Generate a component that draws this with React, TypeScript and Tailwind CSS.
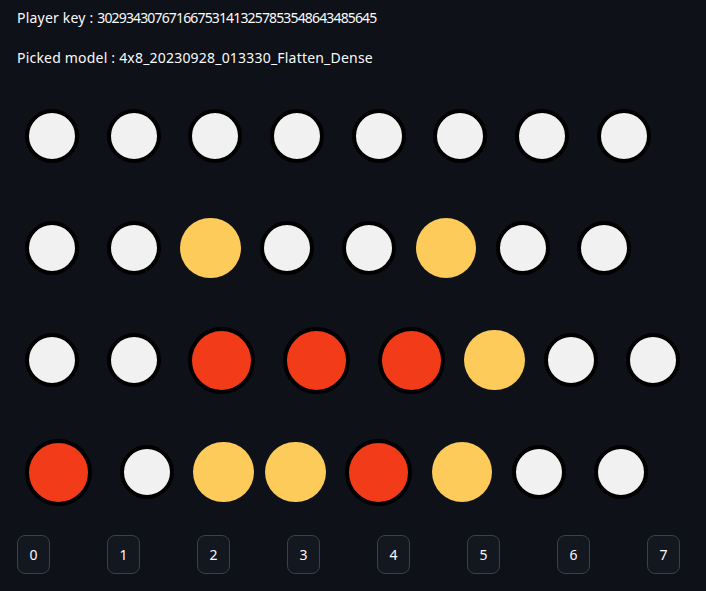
import React from "react";

type Cell = "w" | "r" | "y";

const rows: Cell[][] = [
  ["w", "w", "w", "w", "w", "w", "w", "w"],
  ["w", "w", "y", "w", "w", "y", "w", "w"],
  ["w", "w", "r", "r", "r", "y", "w", "w"],
  ["r", "w", "y", "y", "r", "y", "w", "w"],
];

function Disc({ kind }: { kind: Cell }) {
  if (kind === "y") {
    return <div className="size-[60.4px] shrink-0 rounded-full bg-[#fdcb5a] mx-[5.8px]" />;
  }
  if (kind === "r") {
    return (
      <div className="size-[67px] shrink-0 rounded-full border-4 border-black bg-[#f23b18] mx-[13.85px]" />
    );
  }
  return (
    <div className="size-[54px] shrink-0 rounded-full border-4 border-black bg-[#f1f1f1] mx-[13.85px]" />
  );
}

export default function App() {
  return (
    <div
      className="h-[591px] w-[706px] overflow-hidden bg-[#0e1117] text-[#fafafa]"
      style={{ fontFamily: '"Noto Sans", sans-serif' }}
    >
      {/* Header lines */}
      <div className="pl-[17px] pt-[8px]">
        <p className="h-[40px] whitespace-nowrap text-[14px] leading-[20px] tracking-[0.2px]">
          Player key : <span className="tracking-[-0.85px]">302934307671667531413257853548643485645</span>
        </p>
        <p className="h-[32px] whitespace-nowrap text-[14px] leading-[20px] tracking-[0.2px]">
          Picked model : 4x8_20230928_013330_Flatten_Dense
        </p>
      </div>

      {/* Board */}
      <div className="flex flex-col">
        {rows.map((row, i) => (
          <div key={i} className="flex h-[112px] items-center pl-[11px]">
            {row.map((c, j) => (
              <Disc key={j} kind={c} />
            ))}
          </div>
        ))}
      </div>

      {/* Column buttons */}
      <div className="mt-[7px] grid grid-cols-[repeat(8,74px)] gap-x-4 pl-[17px]">
        {[0, 1, 2, 3, 4, 5, 6, 7].map((n) => (
          <div key={n}>
            <button className="flex h-[38.5px] w-[33px] items-center justify-center rounded-lg border border-[#3d4047] bg-[#131720] text-[14px] text-[#fafafa]">
              {n}
            </button>
          </div>
        ))}
      </div>
    </div>
  );
}
